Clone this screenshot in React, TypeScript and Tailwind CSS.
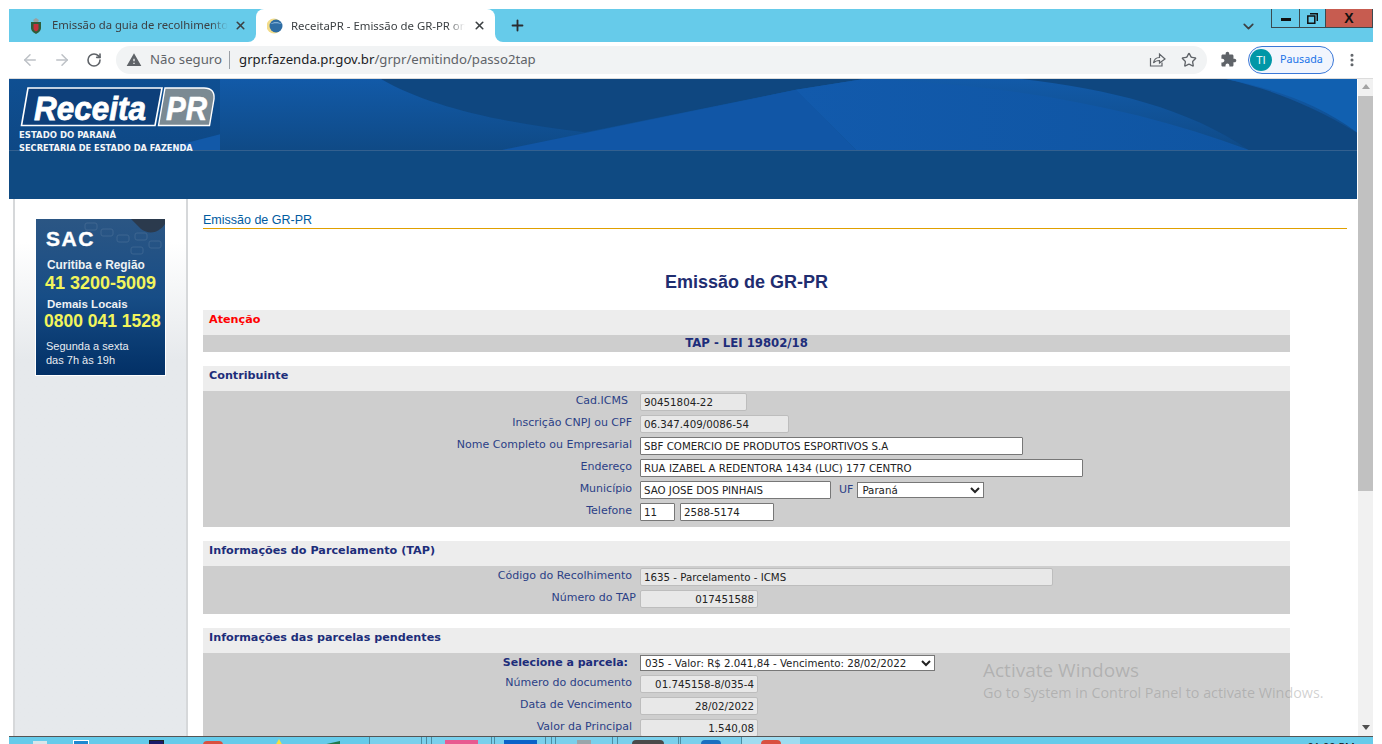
import React from "react";
import { ArrowLeft, ArrowRight, RotateCw, Star, Plus, X, ChevronDown, MoreVertical } from "lucide-react";

const verdana = "font-['DejaVu_Sans',sans-serif]";

const Ear = ({ side }: { side: "left" | "right" }) => (
  <div className={`absolute bottom-0 h-2 w-2 bg-white ${side === "left" ? "-left-2" : "-right-2"}`}>
    <div className={`h-full w-full bg-[#66cbea] ${side === "left" ? "rounded-br-lg" : "rounded-bl-lg"}`} />
  </div>
);

const Shield = () => (
  <svg width="14" height="16" viewBox="0 0 14 16" className="shrink-0">
    <path d="M4 2 L7 0 L10 2 L9 4 H5 Z" fill="#9aa0a0" />
    <path d="M2 4 H12 V10 C12 13 9 15 7 16 C5 15 2 13 2 10 Z" fill="#2f5d3a" />
    <path d="M4.5 6 H9.5 V10.5 C9.5 12 8 13 7 13.5 C6 13 4.5 12 4.5 10.5 Z" fill="#c4303a" />
  </svg>
);

const Globe = () => (
  <svg width="16" height="16" viewBox="0 0 16 16" className="shrink-0">
    <circle cx="7" cy="8" r="7.5" fill="#f3dc8a" />
    <circle cx="9" cy="8" r="6.5" fill="#2e6da4" />
    <path d="M3.5 6 C6 3.5 12 3.5 14.8 6 C12 5 6 5 3.5 6 Z" fill="#9cc3e4" />
  </svg>
);

const Tabs = () => (
  <div className="flex h-[33px] shrink-0 items-start bg-[#66cbea]">
    <div className="flex h-full w-[247px] items-center pl-[20px] pr-[6px]">
      <Shield />
      <span className="ml-[9px] w-[176px] shrink-0 overflow-hidden whitespace-nowrap text-[11.3px] text-[#3c4043] [mask-image:linear-gradient(to_right,black_90%,transparent)]">
        Emissão da guia de recolhimento do ICMS
      </span>
      <X size={13} strokeWidth={3} className="ml-[6px] shrink-0 text-[#3c4043]" />
    </div>
    <div className="relative flex h-full w-[239px] items-center rounded-t-lg bg-white pl-[11px] pr-[8px]">
      <Ear side="left" />
      <Ear side="right" />
      <Globe />
      <span className="ml-[8px] w-[174px] shrink-0 overflow-hidden whitespace-nowrap text-[11.4px] text-[#3c4043] [mask-image:linear-gradient(to_right,black_90%,transparent)]">
        ReceitaPR - Emissão de GR-PR on-line
      </span>
      <X size={13} strokeWidth={3} className="ml-[8px] shrink-0 text-[#3c4043]" />
    </div>
    <div className="ml-[14px] flex h-full items-center">
      <Plus size={17} strokeWidth={2.6} className="text-[#2a2d30]" />
    </div>
    <div className="ml-auto flex h-full items-center pr-[14px]">
      <ChevronDown size={17} strokeWidth={2.4} className="mt-[1px] text-[#3c4043]" />
    </div>
    <div className="flex h-[19px] border-b border-l border-r border-[#3a4a50]">
      <div className="flex w-[28px] items-center justify-center border-r border-[#3a4a50]">
        <div className="mt-[3px] h-[3px] w-[10px] bg-[#111]" />
      </div>
      <div className="flex w-[26px] items-center justify-center border-r border-[#3a4a50]">
        <svg width="11" height="11" viewBox="0 0 11 11">
          <path d="M3 .7 H10.3 V8 M.8 3 H7.8 V10.2 H.8 Z" fill="none" stroke="#111" strokeWidth="1.5" />
        </svg>
      </div>
      <div className="flex w-[46px] items-center justify-center bg-[#c75c50]">
        <span className="font-['Liberation_Sans',sans-serif] text-[14px] font-bold leading-none text-[#111]">X</span>
      </div>
    </div>
  </div>
);

const Toolbar = () => (
  <div className="flex h-[37px] shrink-0 items-center border-b border-[#dcdcdc] bg-white pb-[1px]">
    <ArrowLeft size={18} strokeWidth={2} className="ml-[12px] text-[#bdc1c6]" />
    <ArrowRight size={18} strokeWidth={2} className="ml-[14px] text-[#bdc1c6]" />
    <RotateCw size={16} strokeWidth={2.4} className="ml-[15px] text-[#5f6368]" />
    <div className="ml-[14px] flex h-[28px] w-[1091px] items-center rounded-full bg-[#f1f3f4] pl-[10px] pr-[10px]">
      <svg width="16" height="16" viewBox="0 0 24 24" className="shrink-0">
        <path d="M1 21h22L12 2 1 21zm12-3h-2v-2h2v2zm0-4h-2v-4h2v4z" fill="#5f6368" />
      </svg>
      <span className="ml-[8px] text-[13.2px] text-[#5f6368]">Não seguro</span>
      <div className="ml-[7px] h-[18px] w-px bg-[#9aa0a6]" />
      <span className="ml-[9px] text-[13.2px] text-[#5f6368]">
        <span className="text-[#202124]">grpr.fazenda.pr.gov.br</span>/grpr/emitindo/passo2tap
      </span>
      <svg width="17" height="17" viewBox="0 0 17 17" fill="none" stroke="#5f6368" strokeWidth="1.2" className="ml-auto">
        <path d="M1.5 7 V15 H13 V11.5" />
        <path d="M4.5 12 C5 8.5 7.5 6.5 10.5 6.5 V3 L16 8 L10.5 12 V9.5 C8 9.5 6 10 4.5 12 Z" />
      </svg>
      <Star size={16} strokeWidth={2} className="ml-[15px] text-[#5f6368]" />
    </div>
    <svg width="17" height="17" viewBox="0 0 24 24" className="ml-[13px]">
      <path
        d="M20.5 11H19V7c0-1.1-.9-2-2-2h-4V3.5C13 2.12 11.88 1 10.5 1S8 2.12 8 3.5V5H4c-1.1 0-1.99.9-1.99 2v3.8H3.5c1.49 0 2.7 1.21 2.7 2.7s-1.21 2.7-2.7 2.7H2V20c0 1.1.9 2 2 2h3.8v-1.5c0-1.49 1.21-2.7 2.7-2.7 1.49 0 2.7 1.21 2.7 2.7V22H17c1.1 0 2-.9 2-2v-4h1.5c1.38 0 2.5-1.12 2.5-2.5S21.88 11 20.5 11z"
        fill="#5f6368"
      />
    </svg>
    <div className="ml-[11px] flex h-[28px] w-[86px] items-center rounded-full border border-[#3b78d8] bg-[#f1f5fd] pl-[1px]">
      <div className="flex h-[22px] w-[22px] items-center justify-center rounded-full bg-[#0097a7] font-['Open_Sans',sans-serif] text-[11.5px] text-white">TI</div>
      <span className="ml-[8px] text-[10.7px] text-[#1a73e8]">Pausada</span>
    </div>
    <MoreVertical size={16} strokeWidth={2.6} className="ml-[10px] text-[#5f6368]" />
  </div>
);

const Logo = () => (
  <svg width="196" height="40" viewBox="0 0 196 40" className="block">
    <path d="M8 1 H142 L135 38.5 H1.5 Z" fill="#0d3f7a" stroke="#fff" strokeWidth="1.6" />
    <path d="M145 1 H184 Q195 1 194 12 L189.5 38.5 H138.5 Z" fill="#7b8a93" stroke="#fff" strokeWidth="1.4" />
    <text
      x="14"
      y="33"
      fontFamily="Liberation Sans"
      fontWeight="700"
      fontStyle="italic"
      fontSize="34"
      fill="#fff"
      stroke="#fff"
      strokeWidth="0.8"
      textLength="112"
      lengthAdjust="spacingAndGlyphs"
    >
      Receita
    </text>
    <text
      x="146"
      y="33"
      fontFamily="Liberation Sans"
      fontWeight="700"
      fontStyle="italic"
      fontSize="34"
      fill="#fff"
      stroke="#fff"
      strokeWidth="0.6"
      textLength="41"
      lengthAdjust="spacingAndGlyphs"
    >
      PR
    </text>
  </svg>
);

const Banner = () => (
  <div className="shrink-0 bg-[#0f4a82]">
    <div className="relative h-[72px] border-b border-[#33608f]">
      <svg width="1349" height="71" viewBox="0 0 1349 72" preserveAspectRatio="none" className="absolute inset-0">
        <defs>
          <linearGradient id="sky" x1="0" y1="0" x2="0" y2="1">
            <stop offset="0" stopColor="#125aa8" />
            <stop offset="1" stopColor="#0f4a86" />
          </linearGradient>
          <linearGradient id="dome" x1="0" y1="0" x2="1" y2="0">
            <stop offset="0" stopColor="#125aac" />
            <stop offset="1" stopColor="#0f55a2" />
          </linearGradient>
          <linearGradient id="logoBg" x1="0" y1="0" x2="0" y2="1">
            <stop offset="0" stopColor="#0f4f92" />
            <stop offset="1" stopColor="#0e4885" />
          </linearGradient>
        </defs>
        <rect width="1349" height="72" fill="url(#sky)" />
        <path d="M372 0 C420 28 490 44 576 54 L787 11 L855 0 Z" fill="#0f4780" />
        <path d="M493 72 L787 11 L847 72 Z" fill="#1156a6" />
        <path d="M787 11 L855 0 C1000 5 1130 30 1240 72 L847 72 Z" fill="url(#dome)" />
        <path d="M1013 0 C1100 10 1180 30 1240 72 L1349 72 L1349 55 C1300 25 1260 10 1217 0 Z" fill="#0f4780" />
        <path d="M1217 0 H1349 V55 C1310 25 1265 10 1217 0 Z" fill="#1160b0" />
        <path d="M0 0 H211 V72 H0 Z" fill="url(#logoBg)" />
        <path d="M150 72 L211 56 V72 Z" fill="#1259a8" />
      </svg>
      <div className={`relative pl-[10px] pt-[8px] ${verdana}`}>
        <div className="pl-[1px]">
          <Logo />
        </div>
        <p className="mt-[1px] text-[8.5px] font-bold leading-[14px] text-[#f4f6f8]">ESTADO DO PARANÁ</p>
        <p className="whitespace-nowrap text-[8.25px] font-bold leading-[12px] text-[#f4f6f8]">SECRETARIA DE ESTADO DA FAZENDA</p>
      </div>
    </div>
    <div className="h-[48px]" />
  </div>
);

const SacCard = () => (
  <div className="relative h-[158px] w-[131px] overflow-hidden border border-white bg-gradient-to-b from-[#2b5684] via-[#174d86] to-[#033066] pl-[10px] pt-[8px] font-['Liberation_Sans',sans-serif]">
    <svg width="90" height="42" viewBox="0 0 90 42" className="absolute right-0 top-0">
      <g fill="none" stroke="#8ba3ba" strokeWidth="1" opacity="0.22">
        <rect x="10" y="4" width="12" height="7" rx="2" />
        <rect x="26" y="10" width="12" height="7" rx="2" />
        <rect x="42" y="16" width="12" height="7" rx="2" />
        <rect x="60" y="14" width="12" height="7" rx="2" />
        <rect x="74" y="22" width="12" height="7" rx="2" />
        <rect x="56" y="28" width="12" height="7" rx="2" />
      </g>
      <path d="M56 0 H90 V5 C84 14 74 16 66 10 Z" fill="#2c2f36" opacity="0.7" />
    </svg>
    <p className="relative origin-left text-[21px] font-black leading-[24px] tracking-[1.5px] text-white [-webkit-text-stroke:0.4px_white]">SAC</p>
    <p className="mt-[7px] pl-[1px] text-[11.9px] font-bold leading-[14px] text-[#eef1f4]">Curitiba e Região</p>
    <p className="-ml-[1px] mt-[1px] whitespace-nowrap text-[18px] font-bold leading-[20px] text-[#f2f55c]">41 3200-5009</p>
    <p className="mt-[4px] pl-[1px] text-[11.5px] font-bold leading-[14px] text-[#eef1f4]">Demais Locais</p>
    <p className="-ml-[2px] whitespace-nowrap text-[17.5px] font-bold leading-[20px] text-[#f2f55c]">0800 041 1528</p>
    <p className="mt-[8px] text-[11px] leading-[14px] text-[#e8edf2]">Segunda a sexta</p>
    <p className="text-[11px] leading-[14px] text-[#e8edf2]">das 7h às 19h</p>
  </div>
);

const Sidebar = () => (
  <div className="ml-[4px] w-[175px] shrink-0 border-x-2 border-[#d6d8da] bg-gradient-to-b from-white from-[8%] to-[#e6e9ec] to-[30%] pl-[20px] pt-[19px]">
    <SacCard />
  </div>
);

const SectionTitle = ({ children, red }: { children: React.ReactNode; red?: boolean }) => (
  <div className={`flex h-[25px] items-center bg-[#ededed] pb-[4px] pl-[6px] text-[11.2px] font-bold ${red ? "text-[#ff0000]" : "text-[#1d2d7a]"}`}>
    {children}
  </div>
);

type FieldProps = { w: number; value: string; disabled?: boolean; right?: boolean };

const Field = ({ w, value, disabled, right }: FieldProps) => (
  <input
    readOnly
    value={value}
    style={{ width: w }}
    className={`h-[18px] border px-[3px] text-[10.25px] text-[#222] outline-none ${verdana} ${
      disabled ? "rounded-[2px] border-[#bdbdbd] bg-[#e8e8e8]" : "rounded-[1px] border-[#777] bg-white"
    } ${right ? "text-right" : ""}`}
  />
);

const Row = ({ label, bold, pad, children }: { label: string; bold?: boolean; pad?: number; children: React.ReactNode }) => (
  <div className="flex h-[22px] items-center">
    <div className={`-mt-[1px] w-[429px] shrink-0 text-right text-[11px] ${bold ? "font-bold text-[#1d2d7a]" : "text-[#2b3f86]"}`}>
      <span style={{ marginRight: pad ?? 0 }} className="inline-block">
        {label}
      </span>
    </div>
    <div className="ml-[8px] flex items-center">{children}</div>
  </div>
);

const Main = () => (
  <div className={`ml-[15px] flex-1 overflow-hidden pr-[10px] pt-[15px] ${verdana}`}>
    <div className="border-b border-[#e0a000] pb-px font-['Liberation_Sans',sans-serif] text-[12.5px] leading-[13px] text-[#005b9f]">
      Emissão de GR-PR
    </div>
    <div className="w-[1087px]">
      <h1 className="mt-[44px] text-center font-['Liberation_Sans',sans-serif] text-[18px] font-bold leading-[18px] text-[#1f2d70]">
        Emissão de GR-PR
      </h1>
      <div className="mt-[19px]">
        <SectionTitle red>Atenção</SectionTitle>
        <div className="flex h-[17px] items-center justify-center bg-[#cecece] pt-[1px] text-[11.7px] font-bold text-[#1d2d7a]">TAP - LEI 19802/18</div>
      </div>
      <div className="mt-[14px]">
        <SectionTitle>Contribuinte</SectionTitle>
        <div className="bg-[#cecece] pb-[4px]">
          <Row label="Cad.ICMS" pad={4}>
            <Field w={107} value="90451804-22" disabled />
          </Row>
          <Row label="Inscrição CNPJ ou CPF">
            <Field w={149} value="06.347.409/0086-54" disabled />
          </Row>
          <Row label="Nome Completo ou Empresarial">
            <Field w={383} value="SBF COMERCIO DE PRODUTOS ESPORTIVOS S.A" />
          </Row>
          <Row label="Endereço">
            <Field w={443} value="RUA IZABEL A REDENTORA 1434 (LUC) 177 CENTRO" />
          </Row>
          <Row label="Município">
            <Field w={191} value="SAO JOSE DOS PINHAIS" />
            <span className="ml-[8px] text-[11px] text-[#2b3f86]">UF</span>
            <select defaultValue="PR" className="ml-[4px] h-[16px] w-[127px] border border-[#777] bg-white text-[10.25px] text-[#222]">
              <option value="PR">Paraná</option>
            </select>
          </Row>
          <Row label="Telefone">
            <Field w={35} value="11" />
            <div className="w-[5px]" />
            <Field w={94} value="2588-5174" />
          </Row>
        </div>
      </div>
      <div className="mt-[14px]">
        <SectionTitle>Informações do Parcelamento (TAP)</SectionTitle>
        <div className="bg-[#cecece] pb-[4px]">
          <Row label="Código do Recolhimento">
            <Field w={413} value="1635 - Parcelamento - ICMS" disabled />
          </Row>
          <Row label="Número do TAP" pad={-4}>
            <Field w={118} value="017451588" disabled right />
          </Row>
        </div>
      </div>
      <div className="mt-[14px]">
        <SectionTitle>Informações das parcelas pendentes</SectionTitle>
        <div className="bg-[#cecece] pb-[8px]">
          <div className="flex h-[20px] items-center">
            <div className="w-[425px] shrink-0 text-right text-[11px] font-bold text-[#1d2d7a]">Selecione a parcela:</div>
            <select defaultValue="35" className="ml-[12px] h-[16px] w-[295px] border border-[#777] bg-white text-[10.25px] text-[#222]">
              <option value="35">035 - Valor: R$ 2.041,84 - Vencimento: 28/02/2022</option>
            </select>
          </div>
          <Row label="Número do documento">
            <Field w={118} value="01.745158-8/035-4" disabled right />
          </Row>
          <Row label="Data de Vencimento">
            <Field w={118} value="28/02/2022" disabled right />
          </Row>
          <Row label="Valor da Principal">
            <Field w={118} value="1.540,08" disabled right />
          </Row>
        </div>
      </div>
    </div>
  </div>
);

const Scrollbar = () => (
  <div className="flex w-[16px] shrink-0 flex-col items-center border-l border-white bg-[#f1f1f1]">
    <div className="mt-[5px] h-0 w-0 border-x-[4px] border-b-[5px] border-x-transparent border-b-[#a3a3a3]" />
    <div className="mt-[7px] h-[395px] w-full bg-[#c1c1c1]" />
    <div className="mb-[6px] mt-auto h-0 w-0 border-x-[4px] border-t-[5px] border-x-transparent border-t-[#505050]" />
  </div>
);

const TaskCell = ({ w, active, children }: { w: number; active?: boolean; children?: React.ReactNode }) => (
  <div style={{ width: w }} className={`flex h-full shrink-0 justify-center border-l border-[#4d8ba0] pt-[3px] ${active ? "bg-[#a0dcf0]" : "bg-[#7ad0ec]"}`}>
    {children}
  </div>
);

const Taskbar = () => (
  <div className="flex h-[8px] shrink-0 overflow-hidden border-t border-[#555] bg-[#66cbea]">
    <div className="flex w-[360px] shrink-0 pt-[3px]">
      <div className="ml-[24px] mt-[1px] h-[4px] w-[14px] bg-[#d8e6ea]" />
      <div className="ml-[26px] h-[6px] w-[16px] border border-white bg-[#1e88d0]" />
      <div className="ml-[60px] h-[6px] w-[15px] border border-[#222] bg-[#1a1a6a]" />
      <div className="ml-[39px] mt-[1px] h-[8px] w-[20px] rounded-full bg-[#d95040]" />
      <div className="ml-[52px] -mt-[1px] h-0 w-0 border-x-[4px] border-b-[7px] border-x-transparent border-b-[#f5e040]" />
      <div className="ml-[39px] mt-[1px] h-[4px] w-[18px] bg-[#1f7a4a] [clip-path:polygon(0_100%,100%_0,100%_100%)]" />
    </div>
    <TaskCell w={52} />
    <TaskCell w={5} />
    <TaskCell w={5} />
    <TaskCell w={60}>
      <div className="h-[6px] w-[33px] bg-[#e85a90]" />
    </TaskCell>
    <TaskCell w={3} />
    <TaskCell w={51}>
      <div className="h-[6px] w-[33px] bg-[#0a62c8]" />
    </TaskCell>
    <TaskCell w={6} />
    <TaskCell w={4} />
    <TaskCell w={57}>
      <div className="h-[6px] w-[14px] bg-[#9aa5aa]" />
    </TaskCell>
    <TaskCell w={5} />
    <TaskCell w={61}>
      <div className="h-[6px] w-[32px] rounded-t-sm bg-[#4a4a4a]" />
    </TaskCell>
    <TaskCell w={2} />
    <TaskCell w={61}>
      <div className="h-[8px] w-[20px] rounded-full bg-[#1b6fc0]" />
    </TaskCell>
    <TaskCell w={59} active>
      <div className="h-[8px] w-[20px] rounded-full bg-[#d95040]" />
    </TaskCell>
    <div className="ml-auto pr-[18px] pt-[3px] font-['Open_Sans',sans-serif] text-[11px] leading-[14px] text-[#111]">01:00 PM</div>
  </div>
);

const App: React.FC = () => (
  <div className="relative flex h-[744px] w-[1382px] flex-col overflow-hidden bg-white px-[9px] pt-[9px] font-['Noto_Sans',sans-serif]">
    <Tabs />
    <Toolbar />
    <div className="flex min-h-0 flex-1">
      <div className="flex min-w-0 flex-1 flex-col overflow-hidden">
        <Banner />
        <div className="flex min-h-0 flex-1 overflow-hidden bg-white">
          <Sidebar />
          <Main />
        </div>
      </div>
      <Scrollbar />
    </div>
    <Taskbar />
    <div className="absolute left-[983px] top-[658px] whitespace-nowrap font-['Open_Sans',sans-serif] text-[#7a7a7a]/35">
      <p className="text-[19px] leading-[25px]">Activate Windows</p>
      <p className="text-[14.35px] leading-[20px]">Go to System in Control Panel to activate Windows.</p>
    </div>
  </div>
);

export default App;
